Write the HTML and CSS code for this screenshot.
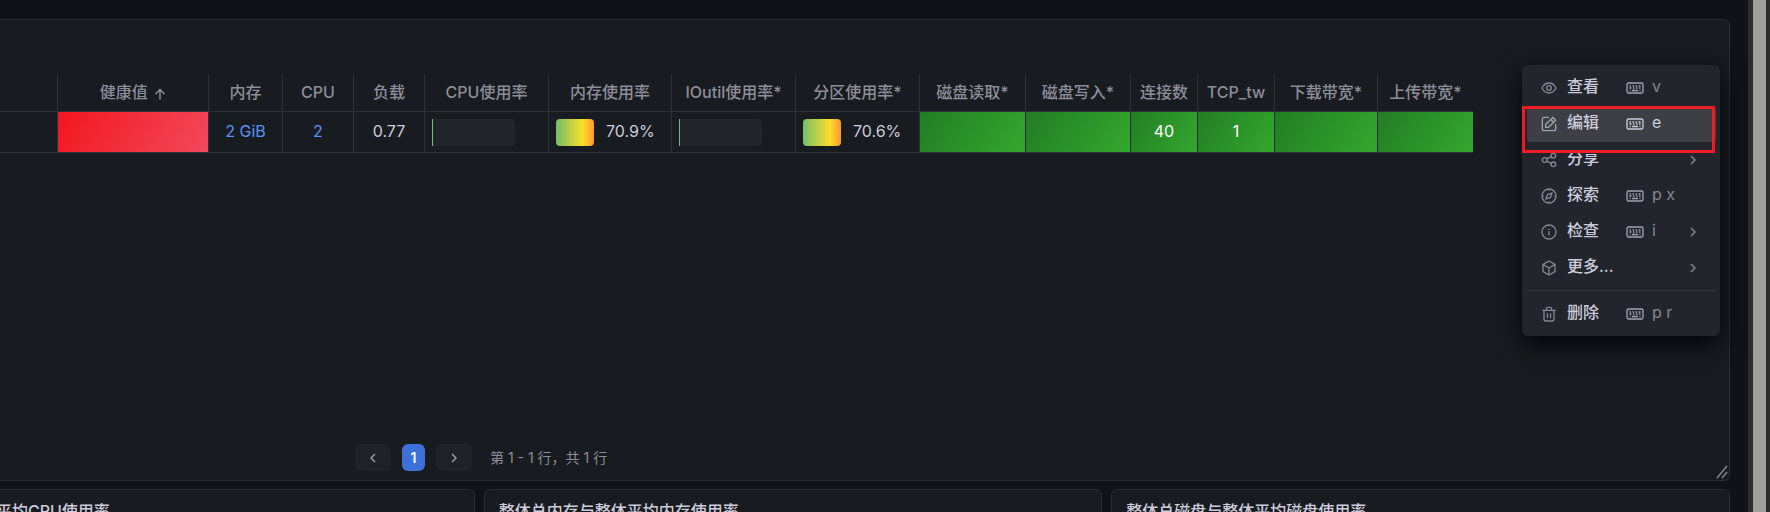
FILE: index.html
```html
<!DOCTYPE html>
<html lang="zh-CN">
<head>
    <meta charset="UTF-8">
    <meta name="viewport" content="width=device-width, initial-scale=1.0">
    <title>主机监控</title>
    <link rel="stylesheet" href="styles.css">
</head>
<body>
    <!-- 图标 -->
    <svg class="sprite" aria-hidden="true">
        <symbol id="i-eye" viewBox="0 0 24 24"><path d="M1.5 12C4 7 7.7 4.500 12 4.500S20 7 22.500 12C20 17 16.300 19.500 12 19.500S4 17 1.500 12Z"/><circle cx="12" cy="12" r="3.500"/></symbol>
        <symbol id="i-edit" viewBox="0 0 24 24"><path d="M12 2H5a3 3 0 0 0-3 3v14a3 3 0 0 0 3 3h14a3 3 0 0 0 3-3v-7"/><path d="M7 17v-4.300L17.700 2l4.300 4.300L11.300 17Z M14.500 5.200l4.300 4.300"/></symbol>
        <symbol id="i-share" viewBox="0 0 24 24"><circle cx="18.500" cy="5.500" r="3.500"/><circle cx="5.500" cy="12" r="3.500"/><circle cx="18.500" cy="18.500" r="3.500"/><path d="M8.600 10.400l6.800-3.400M8.600 13.600l6.800 3.400"/></symbol>
        <symbol id="i-compass" viewBox="0 0 24 24"><circle cx="12" cy="12" r="10.500"/><path d="M16.500 7.500l-2.300 6.700-6.700 2.300 2.300-6.700ZM12 2v2M12 20v2M2 12h2M20 12h2"/></symbol>
        <symbol id="i-info" viewBox="0 0 24 24"><circle cx="12" cy="12" r="10.500"/><path d="M12 11v6M12 7v2"/></symbol>
        <symbol id="i-cube" viewBox="0 0 24 24"><path d="M12 1.500l9 5.200v10.600l-9 5.200-9-5.200V6.700ZM3.500 7l8.500 5 8.500-5M12 12v10"/></symbol>
        <symbol id="i-trash" viewBox="0 0 24 24"><path d="M2 6.500h20M8 6V4.500A2.500 2.500 0 0 1 10.500 2h3A2.500 2.500 0 0 1 16 4.500V6M4.500 7v12.500a3 3 0 0 0 3 3h9a3 3 0 0 0 3-3V7M9.700 11v7M14.300 11v7"/></symbol>
        <symbol id="i-keyboard" viewBox="0 0 18 12"><rect x="1" y="1" width="16" height="10" rx="1.500"/><path d="M3.500 4h1.500M6.500 4h1.500M9.500 4h1.500M12.500 4h2M3.500 6h2M7 6h1.500M10 6h1.500M13 6h1.500M3.500 8.500h1M6 8.500h6M13.500 8.500h1"/></symbol>
        <symbol id="i-right" viewBox="0 0 6 10"><path d="M1 1l4 4-4 4"/></symbol>
        <symbol id="i-left" viewBox="0 0 6 10"><path d="M5 1L1 5l4 4"/></symbol>
        <symbol id="i-up" viewBox="0 0 12 12"><path d="M6 11.500V1.500M1.500 6L6 1.500 10.500 6"/></symbol>
    </svg>

    <div class="dashboard">
        <section class="panel main-panel">
            <table class="host-table">
                <colgroup>
                    <col class="w-name"><col class="w-health"><col class="w-mem"><col class="w-num"><col class="w-num">
                    <col class="w-bar"><col class="w-mem-bar"><col class="w-bar"><col class="w-bar">
                    <col class="w-read"><col class="w-write"><col class="w-conn"><col class="w-tcp"><col class="w-down"><col class="w-up">
                </colgroup>
                <thead>
                    <tr>
                        <th></th>
                        <th>健康值 <svg class="sort-icon"><use href="#i-up"/></svg></th>
                        <th>内存</th>
                        <th>CPU</th>
                        <th>负载</th>
                        <th>CPU使用率</th>
                        <th>内存使用率</th>
                        <th>IOutil使用率*</th>
                        <th>分区使用率*</th>
                        <th>磁盘读取*</th>
                        <th>磁盘写入*</th>
                        <th>连接数</th>
                        <th>TCP_tw</th>
                        <th>下载带宽*</th>
                        <th>上传带宽*</th>
                    </tr>
                </thead>
                <tbody>
                    <tr>
                        <td></td>
                        <td class="bad"></td>
                        <td><a href="#">2 GiB</a></td>
                        <td><a href="#">2</a></td>
                        <td>0.77</td>
                        <td class="bar"><div class="gauge"><span class="gauge-track"></span></div></td>
                        <td class="bar"><div class="gauge"><span class="gauge-fill"></span><span class="gauge-value">70.9%</span></div></td>
                        <td class="bar"><div class="gauge"><span class="gauge-track"></span></div></td>
                        <td class="bar"><div class="gauge"><span class="gauge-fill"></span><span class="gauge-value">70.6%</span></div></td>
                        <td class="good"></td>
                        <td class="good"></td>
                        <td class="good">40</td>
                        <td class="good">1</td>
                        <td class="good"></td>
                        <td class="good"></td>
                    </tr>
                </tbody>
            </table>

            <!-- 分页 -->
            <nav class="pagination">
                <button type="button" class="page-button" aria-label="上一页"><svg class="arrow"><use href="#i-left"/></svg></button>
                <button type="button" class="page-button current-page">1</button>
                <button type="button" class="page-button" aria-label="下一页"><svg class="arrow"><use href="#i-right"/></svg></button>
                <span class="page-summary">第 1 - 1 行，共 1 行</span>
            </nav>

            <svg class="resize-handle" viewBox="0 0 12 14"><path d="M1 13L11 1M6 13l5-6"/></svg>

            <!-- 面板菜单 -->
            <div class="menu">
                <button type="button" class="menu-item"><svg class="icon"><use href="#i-eye"/></svg><span class="label">查看</span><svg class="keyboard"><use href="#i-keyboard"/></svg><span class="keys">v</span></button>
                <button type="button" class="menu-item active"><svg class="icon"><use href="#i-edit"/></svg><span class="label">编辑</span><svg class="keyboard"><use href="#i-keyboard"/></svg><span class="keys">e</span></button>
                <button type="button" class="menu-item"><svg class="icon"><use href="#i-share"/></svg><span class="label">分享</span><svg class="arrow"><use href="#i-right"/></svg></button>
                <button type="button" class="menu-item"><svg class="icon"><use href="#i-compass"/></svg><span class="label">探索</span><svg class="keyboard"><use href="#i-keyboard"/></svg><span class="keys">p x</span></button>
                <button type="button" class="menu-item"><svg class="icon"><use href="#i-info"/></svg><span class="label">检查</span><svg class="keyboard"><use href="#i-keyboard"/></svg><span class="keys">i</span><svg class="arrow"><use href="#i-right"/></svg></button>
                <button type="button" class="menu-item"><svg class="icon"><use href="#i-cube"/></svg><span class="label">更多...</span><svg class="arrow"><use href="#i-right"/></svg></button>
                <div class="divider"></div>
                <button type="button" class="menu-item"><svg class="icon"><use href="#i-trash"/></svg><span class="label">删除</span><svg class="keyboard"><use href="#i-keyboard"/></svg><span class="keys">p r</span></button>
                <div class="marker"></div>
            </div>
        </section>

        <div class="panel-row">
            <section class="panel first"><h2>平均CPU使用率</h2></section>
            <section class="panel"><h2>整体总内存与整体平均内存使用率</h2></section>
            <section class="panel"><h2>整体总磁盘与整体平均磁盘使用率</h2></section>
        </div>
    </div>

    <div class="scrollbar"><div class="thumb"></div></div>
</body>
</html>
```
FILE: styles.css
```css
* {
    box-sizing: border-box;
}

body {
    display: flex;
    margin: 0;
    height: 100vh;
    overflow: hidden;
    background: #111217;
    color: #ccccdc;
    font-family: Inter, "Noto Sans CJK SC", sans-serif;
    font-size: 16px;
    line-height: 24px;
}

svg {
    flex: none;
    fill: none;
    stroke: currentColor;
}

button {
    border: 0;
    padding: 0;
    background: none;
    color: inherit;
    font: inherit;
    cursor: pointer;
}

.sprite {
    position: absolute;
    width: 0;
    height: 0;
}

.dashboard {
    flex: 1;
    display: flex;
    flex-direction: column;
    gap: 8px;
    min-width: 0;
    padding: 19px 18px 0 0;
}

.panel {
    background: #181b1f;
    border: 1px solid #2a2c31;
    border-radius: 6px;
}

.main-panel {
    position: relative;
    flex: 1;
    display: flex;
    flex-direction: column;
    justify-content: space-between;
    padding: 54px 0 9px;
    border-left: 0;
    border-radius: 0 6px 6px 0;
}

/* 表格 */
.host-table {
    table-layout: fixed;
    width: 1473px;
    border-collapse: separate;
    border-spacing: 0;
    text-align: center;
}

.w-name { width: 58px; }
.w-health { width: 151px; }
.w-mem { width: 74px; }
.w-num { width: 71px; }
.w-bar { width: 124px; }
.w-mem-bar { width: 123px; }
.w-read { width: 106px; }
.w-write { width: 105px; }
.w-conn { width: 67px; }
.w-tcp { width: 77px; }
.w-down { width: 103px; }
.w-up { width: 95px; }

th,
td {
    padding: 0 0 2px;
    border-right: 1px solid #2e3035;
    border-bottom: 1px solid #2e3035;
    white-space: nowrap;
}

th:last-child,
td:last-child {
    border-right: 0;
}

th {
    height: 38px;
    color: #8d8e99;
    font-weight: 500;
}

td {
    height: 41px;
}

td a {
    color: #5a92f8;
    text-decoration: none;
}

.sort-icon {
    width: 12px;
    height: 12px;
    margin-left: 2px;
    stroke-width: 1.5;
    vertical-align: -2px;
}

.bad {
    background: linear-gradient(120deg, #f2171f, #f2495c);
}

.good {
    background: linear-gradient(120deg, #237d24, #33a72e);
    color: #fff;
}

.bar {
    padding: 0;
}

.gauge {
    display: flex;
    align-items: center;
    gap: 12px;
    padding-left: 7px;
}

.gauge-track {
    width: 83px;
    height: 27px;
    border-left: 1px solid #73bf69;
    border-radius: 0 4px 4px 0;
    background: #22252b;
}

.gauge-fill {
    width: 38px;
    height: 27px;
    border-radius: 4px;
    background: linear-gradient(90deg, #73bf69, #fade2a 70%, #ff9830);
}

.gauge-value {
    padding-bottom: 2px;
}

/* 分页 */
.pagination {
    display: flex;
    align-items: center;
    gap: 11px;
    padding-left: 355px;
}

.page-button {
    display: flex;
    align-items: center;
    justify-content: center;
    width: 36px;
    height: 27px;
    border-radius: 6px;
    background: #1f2226;
    color: #9c9daa;
}

.current-page {
    width: 23px;
    background: #3d71d9;
    color: #fff;
    font-size: 14px;
    font-weight: 600;
}

.page-summary {
    margin-left: 7px;
    color: #8d8e99;
    font-size: 14px;
}

.arrow {
    width: 6px;
    height: 10px;
    stroke-width: 1.5;
}

.resize-handle {
    position: absolute;
    right: 1px;
    bottom: 1px;
    width: 12px;
    height: 14px;
    color: #85868c;
    stroke-width: 1.5;
}

/* 菜单 */
.menu {
    position: absolute;
    top: 45px;
    right: 9px;
    width: 198px;
    padding: 5px 4px 4px 5px;
    border-radius: 6px;
    background: #22252b;
    box-shadow: 0 8px 24px #010409;
}

.menu-item {
    display: flex;
    align-items: center;
    width: 100%;
    height: 36px;
    padding: 0 20px 0 14px;
    border-radius: 3px;
    color: #85868f;
}

.menu-item .icon {
    width: 16px;
    height: 16px;
    margin-right: 10px;
    stroke-width: 2;
}

.menu-item .label {
    margin-right: 27px;
    padding-bottom: 4px;
    color: #ccccdc;
    font-weight: 500;
}

.menu-item .keyboard {
    width: 18px;
    height: 12px;
    margin-right: 8px;
    color: #a2a3ae;
    stroke-width: 1.3;
}

.menu-item .keys {
    padding-bottom: 4px;
}

.menu-item .arrow {
    margin-left: auto;
}

.menu-item.active {
    background: #3d3f45;
    color: #ccccdc;
}

.menu-item.active .icon {
    color: #a2a3ae;
}

.menu-item.active .keyboard {
    color: #ccccdc;
}

.divider {
    height: 1px;
    margin: 4px 0 5px;
    background: #34363d;
}

.marker {
    position: absolute;
    top: 41px;
    left: 0;
    width: 193px;
    height: 47px;
    border: 3px solid #ed1c24;
    pointer-events: none;
}

/* 下方面板 */
.panel-row {
    display: grid;
    grid-template-columns: 475fr 619fr 619fr;
    gap: 9px;
    height: 23px;
    overflow: hidden;
}

.panel-row .panel {
    height: 200px;
    padding: 9px 14px;
}

.panel-row .first {
    padding-left: 0;
    border-left: 0;
    border-radius: 0 6px 0 0;
}

.panel-row h2 {
    margin: 0;
    font-size: 16px;
    font-weight: 500;
    white-space: nowrap;
}

.first h2 {
    margin-left: -4px;
}

.scrollbar {
    width: 22px;
    padding: 0 4px 0 5px;
    background: #2c2c2c;
}

.thumb {
    height: 100%;
    background: #9f9f9f;
}
```
